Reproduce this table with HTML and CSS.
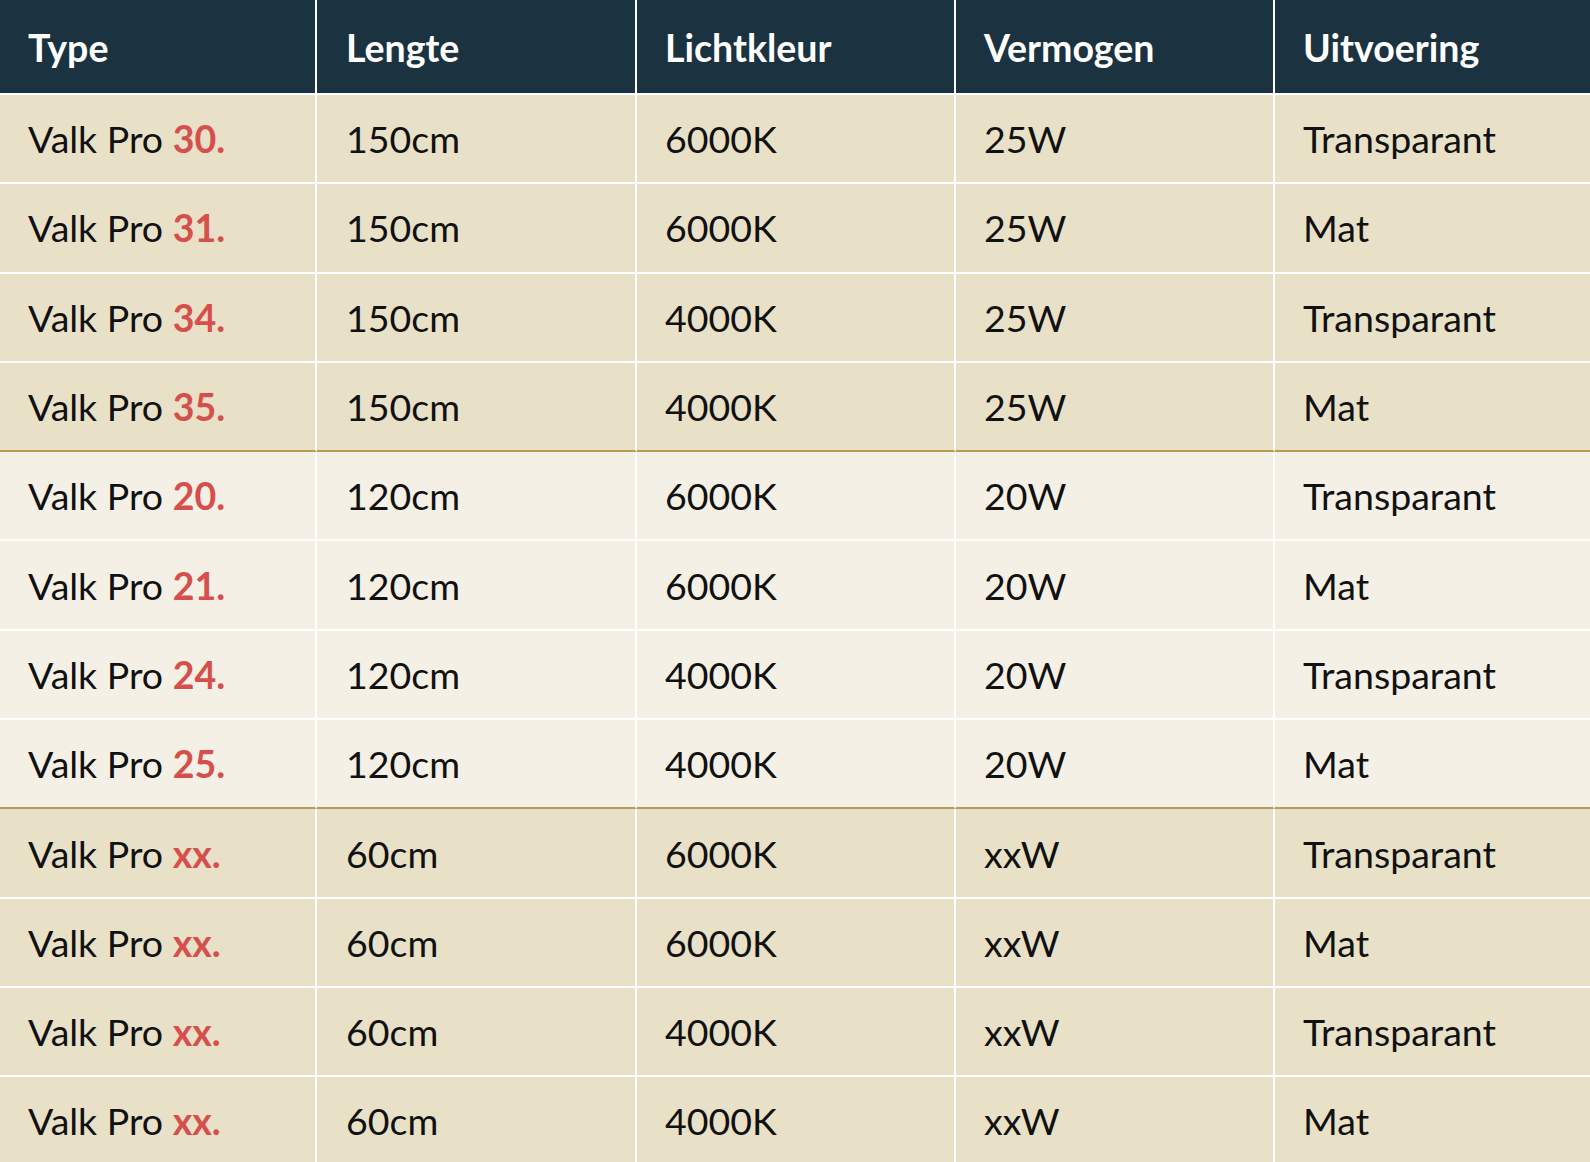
FILE: index.html
```html
<!DOCTYPE html>
<html lang="nl">
<head>
<meta charset="utf-8">
<title>Valk Pro</title>
<link rel="stylesheet" href="styles.css">
</head>
<body>
<table class="specs">
  <thead>
    <tr><th class="c1">Type</th><th class="c2">Lengte</th><th class="c3">Lichtkleur</th><th class="c4">Vermogen</th><th class="c5">Uitvoering</th></tr>
  </thead>
  <tbody class="g1">
    <tr><td>Valk Pro <span class="num">30.</span></td><td>150cm</td><td>6000K</td><td>25W</td><td>Transparant</td></tr>
    <tr><td>Valk Pro <span class="num">31.</span></td><td>150cm</td><td>6000K</td><td>25W</td><td>Mat</td></tr>
    <tr><td>Valk Pro <span class="num">34.</span></td><td>150cm</td><td>4000K</td><td>25W</td><td>Transparant</td></tr>
    <tr class="last"><td>Valk Pro <span class="num">35.</span></td><td>150cm</td><td>4000K</td><td>25W</td><td>Mat</td></tr>
  </tbody>
  <tbody class="g2">
    <tr><td>Valk Pro <span class="num">20.</span></td><td>120cm</td><td>6000K</td><td>20W</td><td>Transparant</td></tr>
    <tr><td>Valk Pro <span class="num">21.</span></td><td>120cm</td><td>6000K</td><td>20W</td><td>Mat</td></tr>
    <tr><td>Valk Pro <span class="num">24.</span></td><td>120cm</td><td>4000K</td><td>20W</td><td>Transparant</td></tr>
    <tr class="last"><td>Valk Pro <span class="num">25.</span></td><td>120cm</td><td>4000K</td><td>20W</td><td>Mat</td></tr>
  </tbody>
  <tbody class="g1">
    <tr><td>Valk Pro <span class="num">xx.</span></td><td>60cm</td><td>6000K</td><td>xxW</td><td>Transparant</td></tr>
    <tr><td>Valk Pro <span class="num">xx.</span></td><td>60cm</td><td>6000K</td><td>xxW</td><td>Mat</td></tr>
    <tr><td>Valk Pro <span class="num">xx.</span></td><td>60cm</td><td>4000K</td><td>xxW</td><td>Transparant</td></tr>
    <tr><td>Valk Pro <span class="num">xx.</span></td><td>60cm</td><td>4000K</td><td>xxW</td><td>Mat</td></tr>
  </tbody>
</table>
</body>
</html>
```
FILE: styles.css
```css
html, body {
  margin: 0;
  padding: 0;
  background: #e8e1c8;
}
body {
  font-family: Lato, "Liberation Sans", sans-serif;
  overflow: hidden;
}
.specs {
  width: 1590px;
  border-collapse: separate;
  border-spacing: 0;
  table-layout: fixed;
  font-size: 37.5px;
}
.specs th, .specs td {
  box-sizing: border-box;
  text-align: left;
  vertical-align: middle;
  padding: 0 0 0 28px;
  border-right: 2px solid #ffffff;
  border-bottom: 2px solid #ffffff;
  white-space: nowrap;
}
.specs th:nth-child(2), .specs td:nth-child(2) {
  padding-left: 29px;
}
.specs th:last-child, .specs td:last-child {
  border-right: none;
}
.c1 { width: 317px; }
.c2 { width: 320px; }
.c3 { width: 319px; }
.c4 { width: 319px; }
.c5 { width: 315px; }
.specs th {
  background: #1b3241;
  color: #ffffff;
  font-weight: 700;
  height: 95px;
  padding-top: 2px;
}
.specs td {
  color: #111111;
  font-weight: 400;
  height: 89.3px;
}
.g1 td { background: #e8e1c8; }
.g2 td { background: #f4f0e5; }
.specs tr.last td {
  border-bottom-color: #b89a55;
}
.num {
  color: #d64f4c;
  font-weight: 700;
}
```
